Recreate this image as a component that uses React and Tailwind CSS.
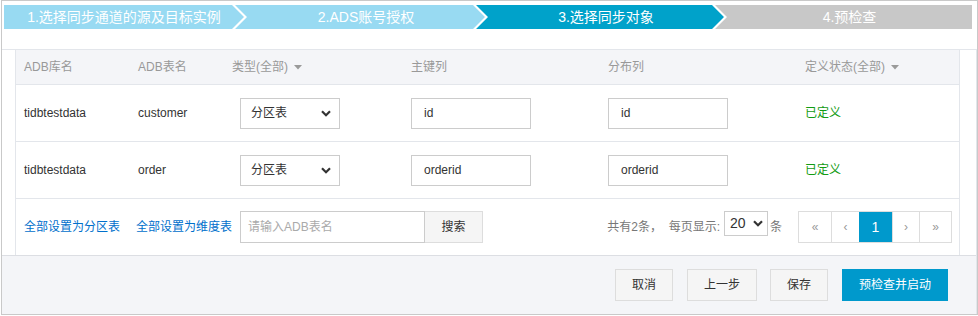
import React from "react";

const Chevron = ({ className = "" }) => (
  <svg width="10" height="7" viewBox="0 0 10 7" className={className}>
    <path d="M1 1.2 L5 5.2 L9 1.2" fill="none" stroke="#333" strokeWidth="2.2" />
  </svg>
);

const Caret = () => (
  <svg width="8" height="5" viewBox="0 0 8 5" className="ml-[6px]">
    <path d="M0 0 L8 0 L4 4.5 Z" fill="#9a9a9a" />
  </svg>
);

function Steps() {
  return (
    <div className="flex h-[24px] mt-[4px] ml-[2px] mr-[5px] text-white text-[14px]">
      <div className="w-[240px] shrink-0 flex items-center justify-center bg-[#98daf2] [clip-path:polygon(0_0,calc(100%_-_12px)_0,100%_50%,calc(100%_-_12px)_100%,0_100%)]">
        1.选择同步通道的源及目标实例
      </div>
      <div className="w-[250px] shrink-0 -ml-[9px] pl-[12px] flex items-center justify-center bg-[#98daf2] [clip-path:polygon(0_0,calc(100%_-_12px)_0,100%_50%,calc(100%_-_12px)_100%,0_100%,12px_50%)]">
        2.ADS账号授权
      </div>
      <div className="w-[248px] shrink-0 -ml-[9px] pl-[12px] flex items-center justify-center bg-[#00a2ca] [clip-path:polygon(0_0,calc(100%_-_12px)_0,100%_50%,calc(100%_-_12px)_100%,0_100%,12px_50%)]">
        3.选择同步对象
      </div>
      <div className="flex-1 -ml-[9px] pl-[12px] flex items-center justify-center bg-[#c8c8c8] [clip-path:polygon(0_0,100%_0,100%_100%,0_100%,12px_50%)]">
        4.预检查
      </div>
    </div>
  );
}

function Row({ db, table, pk, dist }) {
  return (
    <div className="flex h-[57px] border-b border-[#e3e6eb] items-center text-[12px] text-[#333]">
      <div className="w-[114px] pl-[8px]">{db}</div>
      <div className="w-[94px] pl-[8px]">{table}</div>
      <div className="w-[179px] pl-[16px]">
        <div className="w-[100px] h-[31px] border border-[#cccccc] bg-white flex items-center justify-between pl-[10px] pr-[8px]">
          <span>分区表</span>
          <Chevron />
        </div>
      </div>
      <div className="w-[197px] pl-[8px]">
        <div className="w-[120px] h-[31px] border border-[#cccccc] bg-white flex items-center pl-[12px]">{pk}</div>
      </div>
      <div className="w-[197px] pl-[8px]">
        <div className="w-[120px] h-[31px] border border-[#cccccc] bg-white flex items-center pl-[12px]">{dist}</div>
      </div>
      <div className="flex-1 pl-[8px] text-[#129b12]">已定义</div>
    </div>
  );
}

export default function App() {
  return (
    <div className="w-[978px] h-[316px] bg-white pl-[1px] font-['Liberation_Sans','Noto_Sans_CJK_SC',sans-serif]">
      <div className="w-[977px] h-[315px] border border-[#c9c9c9] flex flex-col">
        <Steps />
        <div className="mt-[20px] flex-1 border-t border-r border-[#e3e6eb] flex flex-col">
          <div className="flex pl-[13px]">
            <div className="w-[945px] border-l border-r border-[#e3e6eb] flex flex-col">
              {/* header */}
              <div className="flex h-[35px] border-b border-[#e3e6eb] bg-[#f4f5f8] items-center text-[12px] text-[#999]">
                <div className="w-[114px] pl-[8px]">ADB库名</div>
                <div className="w-[94px] pl-[8px]">ADB表名</div>
                <div className="w-[179px] pl-[8px] flex items-center">类型(全部)<Caret /></div>
                <div className="w-[197px] pl-[8px]">主键列</div>
                <div className="w-[197px] pl-[8px]">分布列</div>
                <div className="flex-1 pl-[8px] flex items-center">定义状态(全部)<Caret /></div>
              </div>
              <Row db="tidbtestdata" table="customer" pk="id" dist="id" />
              <Row db="tidbtestdata" table="order" pk="orderid" dist="orderid" />
              {/* footer row */}
              <div className="flex h-[56px] items-center text-[12px] pl-[8px] pr-[7px]">
                <span className="text-[#0070cc]">全部设置为分区表</span>
                <span className="text-[#0070cc] ml-[16px]">全部设置为维度表</span>
                <div className="ml-[8px] w-[185px] h-[32px] border border-[#cccccc] bg-white flex items-center pl-[7px] text-[#aaa]">
                  请输入ADB表名
                </div>
                <div className="w-[58px] h-[32px] border border-l-0 border-[#dddddd] bg-[#f5f5f5] flex items-center justify-center text-[#333]">
                  搜索
                </div>
                <div className="flex-1" />
                <span className="text-[#777]">共有2条，&nbsp;&nbsp;每页显示:</span>
                <div className="ml-[4px] mb-[7px] w-[44px] h-[25px] border border-[#cccccc] bg-white flex items-center justify-between pl-[5px] pr-[4px] text-[14px] text-[#333]">
                  <span>20</span>
                  <Chevron />
                </div>
                <span className="text-[#777] ml-[2px]">条</span>
                <div className="ml-[16px] flex h-[32px] border border-[#dddddd] text-[#999] text-[12px]">
                  <div className="w-[32px] flex items-center justify-center bg-white">«</div>
                  <div className="w-[28px] border-l border-[#dddddd] flex items-center justify-center bg-white">‹</div>
                  <div className="w-[33px] flex items-center justify-center bg-[#0099cc] text-white text-[14px]">1</div>
                  <div className="w-[27px] border-l border-[#dddddd] flex items-center justify-center bg-white">›</div>
                  <div className="w-[32px] border-l border-[#dddddd] flex items-center justify-center bg-white">»</div>
                </div>
              </div>
            </div>
          </div>
          {/* bottom bar */}
          <div className="flex-1 border-t border-[#dcdee3] bg-[#f4f5f8] flex items-start justify-end pt-[13px] pr-[28px] text-[12px]">
            <div className="w-[58px] h-[32px] border border-[#dddddd] bg-[#f5f5f5] flex items-center justify-center text-[#333]">取消</div>
            <div className="ml-[14px] w-[70px] h-[32px] border border-[#dddddd] bg-[#f5f5f5] flex items-center justify-center text-[#333]">上一步</div>
            <div className="ml-[13px] w-[58px] h-[32px] border border-[#dddddd] bg-[#f5f5f5] flex items-center justify-center text-[#333]">保存</div>
            <div className="ml-[14px] w-[106px] h-[32px] bg-[#0099cc] flex items-center justify-center text-white">预检查并启动</div>
          </div>
        </div>
      </div>
    </div>
  );
}
